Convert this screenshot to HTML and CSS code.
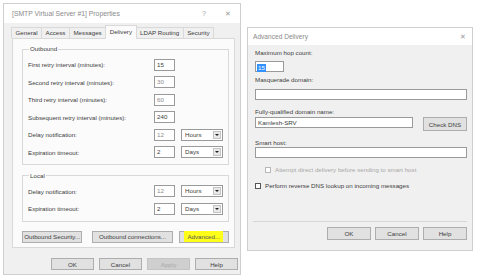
FILE: index.html
```html
<!DOCTYPE html>
<html lang="en">
<head>
  <meta charset="UTF-8" />
  <title>SMTP Virtual Server - Delivery</title>
  <link rel="stylesheet" href="styles.css">
</head>
<body>
  <div class="desk">
    <div class="dlg props">
      <div class="titlebar">
        <span class="title">[SMTP Virtual Server #1] Properties</span>
        <span class="help-q">?</span>
        <span class="close">&#x2715;</span>
      </div>
      <div class="tabs">
        <span class="tab">General</span>
        <span class="tab">Access</span>
        <span class="tab">Messages</span>
        <span class="tab active">Delivery</span>
        <span class="tab">LDAP Routing</span>
        <span class="tab">Security</span>
      </div>
      <div class="panel">
        <fieldset class="group outbound">
          <legend>Outbound</legend>
          <div class="row"><span class="lbl">First retry interval (minutes):</span><span class="field">15</span></div>
          <div class="row"><span class="lbl">Second retry interval (minutes):</span><span class="field dim">30</span></div>
          <div class="row"><span class="lbl">Third retry interval (minutes):</span><span class="field dim">60</span></div>
          <div class="row"><span class="lbl">Subsequent retry interval (minutes):</span><span class="field">240</span></div>
          <div class="row"><span class="lbl">Delay notification:</span><span class="field dim">12</span><span class="combo">Hours<i class="arr"></i></span></div>
          <div class="row"><span class="lbl">Expiration timeout:</span><span class="field">2</span><span class="combo">Days<i class="arr"></i></span></div>
        </fieldset>
        <fieldset class="group local">
          <legend>Local</legend>
          <div class="row"><span class="lbl">Delay notification:</span><span class="field dim">12</span><span class="combo">Hours<i class="arr"></i></span></div>
          <div class="row"><span class="lbl">Expiration timeout:</span><span class="field">2</span><span class="combo">Days<i class="arr"></i></span></div>
        </fieldset>
        <div class="panel-btns">
          <span class="btn b-sec">Outbound Security...</span>
          <span class="btn b-conn">Outbound connections...</span>
          <span class="btn b-adv"><span class="mark">Advanced...</span></span>
        </div>
      </div>
      <div class="dlg-btns">
        <span class="btn">OK</span>
        <span class="btn">Cancel</span>
        <span class="btn off">Apply</span>
        <span class="btn">Help</span>
      </div>
    </div>

    <div class="dlg adv">
      <div class="titlebar">
        <span class="title">Advanced Delivery</span>
        <span class="close">&#x2715;</span>
      </div>
      <div class="adv-body">
        <div class="cap">Maximum hop count:</div>
        <div class="field hop"><span class="sel">15</span></div>
        <div class="cap c2">Masquerade domain:</div>
        <div class="field wide f2"></div>
        <div class="cap c3">Fully-qualified domain name:</div>
        <div class="fqdn">
          <div class="field name">Kamlesh-SRV</div>
          <span class="btn dns">Check DNS</span>
        </div>
        <div class="cap c4">Smart host:</div>
        <div class="field wide f4"></div>
        <div class="check off indent"><i class="box"></i>Attempt direct delivery before sending to smart host</div>
        <div class="check"><i class="box"></i>Perform reverse DNS lookup on incoming messages</div>
      </div>
      <div class="adv-foot">
        <span class="btn">OK</span>
        <span class="btn">Cancel</span>
        <span class="btn">Help</span>
      </div>
    </div>
  </div>
</body>
</html>
```

FILE: styles.css
```css
* { margin: 0; padding: 0; box-sizing: border-box; }
body {
  background: #fff;
  font-family: "Liberation Sans", Arial, sans-serif;
  font-size: 6.2px;
  color: #3c3c3c;
}
.desk {
  display: flex;
  align-items: flex-start;
  gap: 6px;
  padding: 3px 0 0 3px;
}
.dlg {
  background: #f0f0f0;
  border: 1px solid #cfcfcf;
  display: flex;
  flex-direction: column;
}
.titlebar {
  background: #fff;
  display: flex;
  align-items: center;
  color: #8a8a8a;
}
.title { flex: 1; font-size: 6.8px; }
.close { color: #9a9a9a; font-size: 7px; }

/* properties dialog */
.props { width: 238px; height: 272px; }
.props .titlebar { height: 19px; padding: 0 9px 0 8px; }
.help-q { margin-right: 19px; font-size: 7px; color: #a0a0a0; }
.tabs {
  display: flex;
  align-items: flex-end;
  height: 14px;
  margin: 1px 0 0 7px;
}
.tab {
  height: 11px;
  line-height: 10px;
  padding: 0 3.5px;
  border: 1px solid #d9d9d9;
  border-bottom: none;
  margin-right: -1px;
  background: #f0f0f0;
}
.tab.active {
  height: 14px;
  line-height: 12px;
  background: #fbfbfb;
  position: relative;
  z-index: 1;
  margin-bottom: -1px;
  padding-bottom: 1px;
}
.panel {
  margin: 0 5px 0 8px;
  height: 210px;
  background: #fbfbfb;
  border: 1px solid #d9d9d9;
  padding: 6px 5px 0 9px;
}
.group {
  border: 1px solid #d9d9d9;
  padding: 0 0 6px 5px;
}
.group legend {
  margin-left: 1px;
  padding: 0 1px;
  line-height: 8px;
}
.local { margin-top: 6.5px; }
.row {
  display: flex;
  align-items: center;
  height: 12px;
  margin-top: 5.5px;
}
.lbl { width: 126px; }
.field {
  background: #fff;
  border: 1px solid #9a9a9a;
  height: 12px;
  width: 21px;
  padding-left: 2px;
  line-height: 10px;
}
.field.dim { color: #8a8a8a; }
.combo {
  margin-left: 6px;
  width: 42px;
  height: 12px;
  border: 1px solid #9a9a9a;
  background: #fff;
  padding-left: 3px;
  line-height: 10px;
  display: flex;
  align-items: center;
  justify-content: space-between;
}
.arr {
  width: 8px;
  height: 8px;
  margin-right: 1px;
  background: #e8e8e8;
  border: 1px solid #c4c4c4;
  display: flex;
  align-items: center;
  justify-content: center;
}
.arr::after {
  content: "";
  border-left: 2px solid transparent;
  border-right: 2px solid transparent;
  border-top: 2px solid #222;
}
.btn {
  display: inline-flex;
  align-items: center;
  justify-content: center;
  height: 12px;
  background: #e1e1e1;
  border: 1px solid #adadad;
  color: #3c3c3c;
}
.panel-btns {
  display: flex;
  margin-top: 9px;
}
.b-sec { width: 61px; }
.b-conn { width: 81px; margin-left: 10px; }
.b-adv { width: 51px; margin-left: 6px; }
.mark { background: #ffff1a; padding: 2px 3px; color: #555; }
.dlg-btns {
  display: flex;
  justify-content: flex-end;
  gap: 5px;
  margin: 10px 2px 0 0;
}
.dlg-btns .btn { width: 43px; }
.btn.off { background: #cfcfcf; color: #a8a8a8; border-color: #c4c4c4; }

/* advanced delivery dialog */
.adv { width: 226px; height: 224px; margin-top: 24px; }
.adv .titlebar { height: 17px; padding: 0 6px 0 5px; }
.adv .title { font-size: 6.6px; }
.adv-body {
  padding: 4px 5px 0 7px;
  display: flex;
  flex-direction: column;
}
.cap { line-height: 8px; }
.adv-body .field { height: 11px; }
.hop { width: 29px; padding: 1px; margin-top: 4px; }
.sel { background: #3390ff; color: #fff; padding: 0 1px; line-height: 8px; display: inline-block; }
.c2 { margin-top: 4px; }
.f2 { margin-top: 5px; }
.c3 { margin-top: 8px; }
.fqdn { display: flex; align-items: flex-start; justify-content: space-between; margin-top: 1px; }
.c4 { margin-top: 8px; }
.adv-body .field.wide { width: 100%; }
.field.name { width: 158px; }
.btn.dns { width: 44px; height: 14px; }
.check {
  display: flex;
  align-items: center;
  margin-top: 8px;
  line-height: 8px;
}
.check .box {
  width: 6px;
  height: 6px;
  border: 1px solid #555;
  background: #fff;
  margin-right: 4px;
}
.check.indent { margin-left: 10px; }
.check.off { color: #a8a8a8; }
.check.off .box { border-color: #b8b8b8; }
.adv-foot {
  margin: auto 5px 0 5px;
  border-top: 1px solid #d6d6d6;
  padding: 5px 0 10px;
  display: flex;
  justify-content: flex-end;
  gap: 4px;
}
.adv-foot .btn { width: 44px; height: 13px; }
```
